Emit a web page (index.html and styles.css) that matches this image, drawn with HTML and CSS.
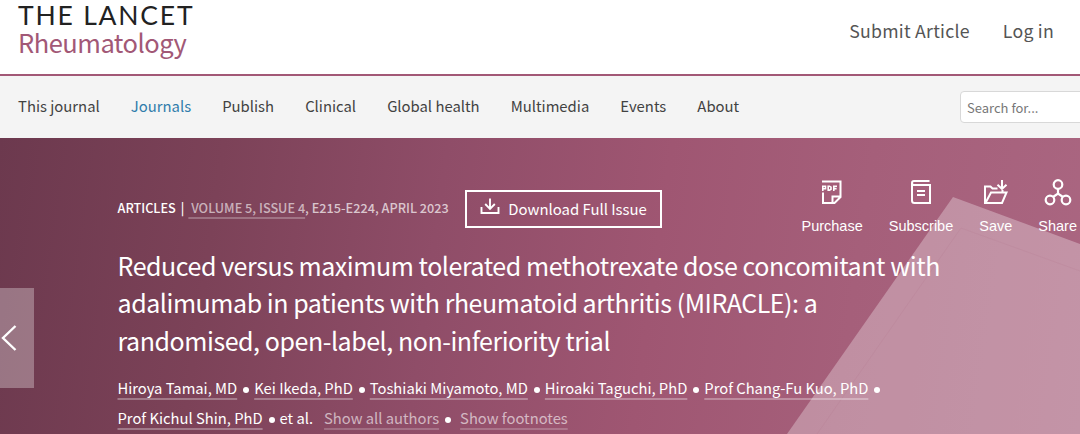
FILE: index.html
```html
<!DOCTYPE html>
<html lang="en">
<head>
    <meta charset="UTF-8">
    <meta name="viewport" content="width=device-width, initial-scale=1.0">
    <title>The Lancet Rheumatology</title>
    <link rel="stylesheet" href="styles.css">
</head>
<body>
<header class="header">
    <a class="logo" href="#">
        <span class="logo-brand">THE LANCET</span>
        <span class="logo-journal">Rheumatology</span>
    </a>
    <div class="account">
        <a class="submit" href="#">Submit Article</a>
        <a class="login" href="#">Log in</a>
    </div>
</header>

<nav class="navbar">
    <ul class="menu">
        <li><a href="#">This journal</a></li>
        <li><a class="active" href="#">Journals</a></li>
        <li><a href="#">Publish</a></li>
        <li><a href="#">Clinical</a></li>
        <li><a href="#">Global health</a></li>
        <li><a href="#">Multimedia</a></li>
        <li><a href="#">Events</a></li>
        <li><a href="#">About</a></li>
    </ul>
    <input class="search" type="text" placeholder="Search for...">
</nav>

<main class="hero">
    <svg class="hero-shape" viewBox="0 0 1080 296">
        <polygon points="953,59 1080,106 1080,296 787,296" fill="#fff" fill-opacity=".3"/>
        <polyline points="817,296 961,90 1080,133" fill="none" stroke="#a8647e" stroke-opacity=".2" stroke-width=".6"/>
    </svg>

    <a class="prev" href="#">
        <svg width="17" height="28" viewBox="0 0 17 28"><path d="M15.500 2L3 14l12.500 12" fill="none" stroke="#fff" stroke-width="2.400"/></svg>
    </a>

    <div class="top-row">
        <div class="meta">
            <span class="meta-type">ARTICLES</span>
            <span class="meta-bar">|</span>
            <span class="meta-issue"><a href="#">&nbsp;VOLUME 5, ISSUE 4</a>, E215-E224, APRIL 2023</span>
        </div>
        <a class="download" href="#">
            <svg width="20" height="17" viewBox="0 0 20 17"><path d="M1.500 9v6h17V9M10 .5v10M5.200 6l4.800 4.800L14.800 6" fill="none" stroke="#fff" stroke-width="1.900"/></svg>
            <span>Download Full Issue</span>
        </a>

        <div class="tools">
            <a class="tool" href="#">
                <svg width="26" height="28" viewBox="0 0 26 28" fill="none" stroke="#fff" stroke-width="2">
                    <path d="M3 2.500h18.500v15.500l-6 6H4V13.500M13.500 24v-6.500h8"/>
                    <path d="M3.800 12V7.200h2.700v2.600H3.800M9.200 7.200v4h1.300l1.500-1V8.200l-1.500-1zM14.800 12V7.200h3.200M14.800 9.600h2.800" stroke-width="1.600"/>
                </svg>
                <span>Purchase</span>
            </a>
            <a class="tool" href="#">
                <svg width="26" height="28" viewBox="0 0 26 28" fill="none" stroke="#fff" stroke-width="2">
                    <path d="M21.500 2H6Q4 2 4 4v17.500Q4 24 6.500 24H22V6H6Q4 6 4 4M9 12h8M9 16h8"/>
                </svg>
                <span>Subscribe</span>
            </a>
            <a class="tool" href="#">
                <svg width="26" height="28" viewBox="0 0 26 28" fill="none" stroke="#fff" stroke-width="2">
                    <path d="M14.500 9.500H9.500L7.500 7.500H2V24h17l4.500-10.500H8L3 23M19.500 13.500V11M19 1v9M14.500 5.800L19 10l4.500-4.200"/>
                </svg>
                <span>Save</span>
            </a>
            <a class="tool" href="#">
                <svg width="28" height="28" viewBox="0 0 28 28" fill="none" stroke="#fff" stroke-width="2.200">
                    <circle cx="14" cy="5.500" r="4.300"/>
                    <circle cx="6" cy="21" r="4.300"/>
                    <circle cx="22" cy="21" r="4.300"/>
                    <path d="M14 10v5M9 18l5-3.500 5 3.500"/>
                </svg>
                <span>Share</span>
            </a>
        </div>
    </div>

    <h1 class="title">
        Reduced versus maximum tolerated methotrexate dose concomitant with<br>
        adalimumab in patients with rheumatoid arthritis (MIRACLE): a<br>
        randomised, open-label, non-inferiority trial
    </h1>

    <div class="authors">
        <div class="author-line">
            <a href="#">Hiroya Tamai, MD</a><i class="dot"></i>
            <a href="#">Kei Ikeda, PhD</a><i class="dot"></i>
            <a href="#">Toshiaki Miyamoto, MD</a><i class="dot"></i>
            <a href="#">Hiroaki Taguchi, PhD</a><i class="dot"></i>
            <a href="#">Prof Chang-Fu Kuo, PhD</a><i class="dot"></i>
        </div>
        <div class="author-line">
            <a href="#">Prof Kichul Shin, PhD</a><i class="dot"></i>
            <span>et al.</span>
            <a class="show-all" href="#">Show all authors</a><i class="dot"></i>
            <a class="show-notes" href="#">Show footnotes</a>
        </div>
    </div>
</main>
</body>
</html>
```
FILE: styles.css
```css
:root {
    --plum: #a25876;
    --text: #424242;
    --nav-bg: #f4f4f4;
}

* {
    box-sizing: border-box;
}

body {
    margin: 0;
    font-family: "Noto Sans CJK SC", "Open Sans", sans-serif;
    color: var(--text);
    background-color: #fff;
    overflow: hidden;
}

a {
    color: inherit;
    text-decoration: none;
}

.header {
    display: flex;
    justify-content: space-between;
    height: 76px;
    padding: 0 26px 0 18px;
    border-bottom: 2px solid var(--plum);
}

.logo {
    display: flex;
    flex-direction: column;
    white-space: nowrap;
}

.logo-brand {
    font-family: Lato, sans-serif;
    font-size: 26.5px;
    line-height: 30px;
    letter-spacing: 1.8px;
    color: #222;
}

.logo-journal {
    font-size: 25.5px;
    line-height: 24px;
    letter-spacing: -0.5px;
    color: var(--plum);
}

.account {
    display: flex;
    gap: 33px;
    padding-top: 15px;
    font-size: 17.7px;
    line-height: 30px;
    letter-spacing: 0.25px;
    color: #555;
}

.navbar {
    display: flex;
    align-items: center;
    justify-content: space-between;
    height: 62px;
    padding-left: 18px;
    background-color: var(--nav-bg);
    overflow: hidden;
}

.menu {
    display: flex;
    gap: 31.1px;
    margin: 0;
    padding: 0 0 3px;
    list-style: none;
    font-size: 14.85px;
    line-height: 24px;
    white-space: nowrap;
}

.menu .active {
    color: #2f7cab;
}

.search {
    flex: none;
    width: 140px;
    height: 32px;
    margin-right: -20px;
    padding: 0 6px;
    border: 1px solid #d8d8d8;
    border-radius: 4px;
    background-color: #fff;
    font-family: inherit;
    font-size: 13px;
}

.search::placeholder {
    color: #777;
}

.hero {
    position: relative;
    height: 296px;
    padding: 41px 3px 0 117.5px;
    color: #fff;
    background: linear-gradient(98deg, #6c394e 0%, #7c4258 20%, #8f4d68 40%, #9f5672 60%, #a55f7a 78%, #aa6681 100%);
}

.hero-shape {
    position: absolute;
    top: 0;
    left: 0;
    width: 1080px;
    height: 296px;
}

.prev {
    position: absolute;
    left: 0;
    top: 150px;
    display: flex;
    align-items: center;
    width: 34px;
    height: 100px;
    background-color: rgba(255, 255, 255, 0.3);
}

.top-row,
.title,
.authors {
    position: relative;
}

.top-row {
    display: flex;
    height: 68px;
    white-space: nowrap;
}

.meta {
    display: flex;
    padding-top: 18px;
    font-size: 12.7px;
    font-weight: 500;
    line-height: 22px;
}

.meta-bar {
    margin: 0 4px 0 5px;
}

.meta-issue {
    color: rgba(255, 255, 255, 0.7);
}

.meta-issue a {
    color: rgba(255, 255, 255, 0.6);
    text-decoration: underline;
    text-decoration-color: rgba(255, 255, 255, 0.25);
    text-decoration-thickness: 2px;
    text-underline-offset: 4px;
    text-decoration-skip-ink: none;
}

.download {
    display: flex;
    align-items: center;
    gap: 8px;
    width: 197px;
    height: 38px;
    margin: 11px 0 0 16.5px;
    padding-left: 13px;
    border: 2px solid #fff;
    font-size: 14.9px;
    line-height: 30px;
}

.download svg {
    margin-bottom: 5px;
}

.tools {
    display: flex;
    gap: 26px;
    margin-left: auto;
}

.tool {
    display: flex;
    flex-direction: column;
    align-items: center;
    font-family: "Liberation Sans", Arial, sans-serif;
    font-size: 14.5px;
    line-height: 18px;
}

.tool svg {
    margin-bottom: 10px;
}

.title {
    margin: 0;
    font-size: 25px;
    font-weight: 400;
    line-height: 37.3px;
    letter-spacing: -0.45px;
    white-space: nowrap;
}

.authors {
    padding-top: 14px;
    font-size: 14.75px;
    line-height: 30.5px;
}

.author-line {
    display: flex;
    align-items: center;
    white-space: nowrap;
}

.author-line a {
    text-decoration: underline;
    text-decoration-color: rgba(255, 255, 255, 0.3);
    text-decoration-thickness: 2px;
    text-underline-offset: 4px;
    text-decoration-skip-ink: none;
}

.author-line .show-all,
.author-line .show-notes {
    color: rgba(255, 255, 255, 0.6);
    text-decoration-color: rgba(255, 255, 255, 0.2);
}

.show-all {
    margin-left: 11px;
}

.show-notes {
    margin-left: 4px;
}

.dot {
    width: 6px;
    height: 6px;
    margin: 3px 5px 0 6px;
    border-radius: 50%;
    background-color: #fff;
}
```
